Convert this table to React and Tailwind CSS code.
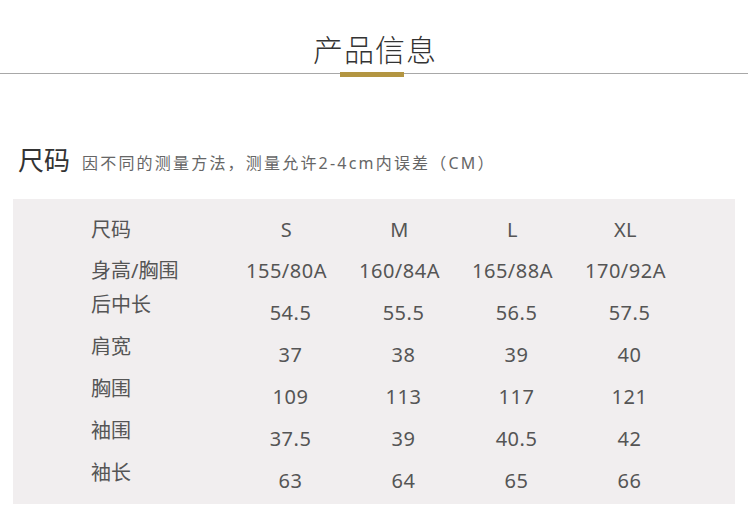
import React from 'react';

const sizes = ['S', 'M', 'L', 'XL'];

const rows = [
  { label: '身高/胸围', values: ['155/80A', '160/84A', '165/88A', '170/92A'] },
  { label: '后中长', values: ['54.5', '55.5', '56.5', '57.5'] },
  { label: '肩宽', values: ['37', '38', '39', '40'] },
  { label: '胸围', values: ['109', '113', '117', '121'] },
  { label: '袖围', values: ['37.5', '39', '40.5', '42'] },
  { label: '袖长', values: ['63', '64', '65', '66'] },
];

const font = { fontFamily: '"Noto Sans", "Noto Sans CJK SC", sans-serif' };

const App = () => {
  return (
    <div className="w-[750px] h-[520px] bg-white overflow-hidden" style={font}>
      {/* Header */}
      <div className="pt-[30px] flex flex-col items-center">
        <h1 className="text-[30px] leading-[40px] font-light text-[#333] tracking-[1px]">产品信息</h1>
        <div className="relative w-full h-[8px] flex items-center justify-center">
          <div className="absolute left-0 right-[2px] top-[3px] h-px bg-[#a8a8a8]"></div>
          <div className="relative -ml-[6px] w-[64px] h-[5px] bg-[#b39541]"></div>
        </div>
      </div>

      {/* Section title */}
      <div className="mt-[64px] pl-[18px] flex items-end">
        <span className="text-[26px] leading-[36px] text-[#333]">尺码</span>
        <span className="ml-[12px] mb-[5px] text-[16px] leading-[20px] text-[#666] tracking-[2.2px]">
          因不同的测量方法，测量允许2-4cm内误差（CM）
        </span>
      </div>

      {/* Table */}
      <div className="mt-[21px] ml-[13px] w-[722px] h-[305px] bg-[#f1eeef] pt-[10px] text-[#555]">
        <div className="flex items-center h-[41px]">
          <div className="w-[78px] shrink-0"></div>
          <div className="w-[139px] shrink-0 text-[20px]">尺码</div>
          {sizes.map((s) => (
            <div key={s} className="w-[113px] text-center text-[20px] tracking-[0.5px]">{s}</div>
          ))}
        </div>
        {rows.map((row, i) => (
          <div key={row.label} className="flex items-center h-[42px]">
            <div className="w-[78px] shrink-0"></div>
            <div className={i === 0 ? 'w-[139px] shrink-0 text-[20px]' : 'w-[139px] shrink-0 text-[20px] -translate-y-[8px]'}>{row.label}</div>
            {row.values.map((v) => (
              <div key={v} className={i === 0 ? 'w-[113px] text-center text-[20px] tracking-[0.5px]' : 'w-[113px] text-center text-[20px] tracking-[0.5px] translate-x-[4px]'}>{v}</div>
            ))}
          </div>
        ))}
      </div>
    </div>
  );
};

export default App;
